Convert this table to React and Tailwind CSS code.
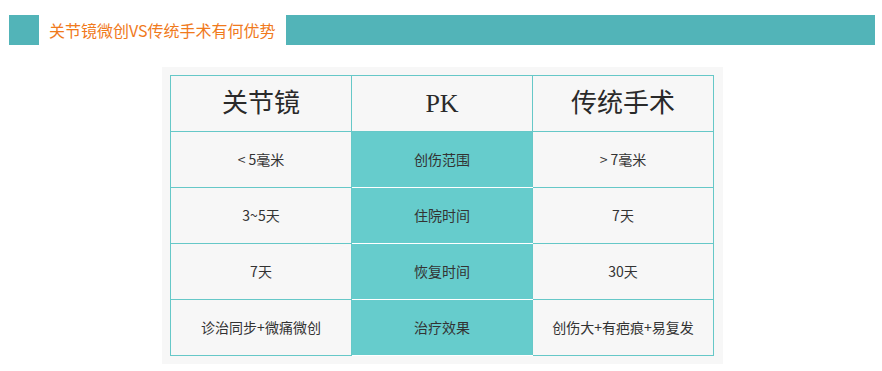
// Comparison table: arthroscopy vs traditional surgery
const rows = [
  ["< 5毫米", "创伤范围", "> 7毫米"],
  ["3~5天", "住院时间", "7天"],
  ["7天", "恢复时间", "30天"],
  ["诊治同步+微痛微创", "治疗效果", "创伤大+有疤痕+易复发"],
];

export default function App() {
  const font = { fontFamily: '"Microsoft YaHei", "Noto Sans CJK SC", sans-serif' };
  return (
    <div className="w-[882px] h-[371px] bg-white" style={font}>
      <div className="flex items-center h-[30px] mt-[15px] ml-[9px] w-[866px]">
        <div className="w-[30px] h-full bg-[#52b4b8]" />
        <div className="pl-[10px] pr-[10px] text-[16px] text-[#f07a1c] whitespace-nowrap">
          关节镜微创VS传统手术有何优势
        </div>
        <div className="flex-1 h-full bg-[#52b4b8]" />
      </div>
      <div className="mt-[22px] ml-[162px] w-[561px] bg-[#f7f7f7] pt-[8px] pb-[8px] pl-[8px]">
        <table className="border-collapse text-[#333] table-fixed w-[544px]">
          <thead>
            <tr className="h-[56px]">
              {["关节镜", "PK", "传统手术"].map((h) => (
                <th
                  key={h}
                  className="border border-[#66c8c8] w-[181px] font-normal text-[26px] text-[#2a2a2a] text-center"
                  style={{ fontFamily: '"Liberation Serif", "Noto Sans CJK SC", serif' }}
                >
                  {h}
                </th>
              ))}
            </tr>
          </thead>
          <tbody>
            {rows.map((r, i) => (
              <tr key={i} className="h-[56px] text-[14px]">
                <td className="border border-[#66c8c8] text-center">{r[0]}</td>
                <td className="border-x border-[#66c8c8] border-y border-y-white bg-[#66cccc] text-center">{r[1]}</td>
                <td className="border border-[#66c8c8] text-center">{r[2]}</td>
              </tr>
            ))}
          </tbody>
        </table>
      </div>
    </div>
  );
}
